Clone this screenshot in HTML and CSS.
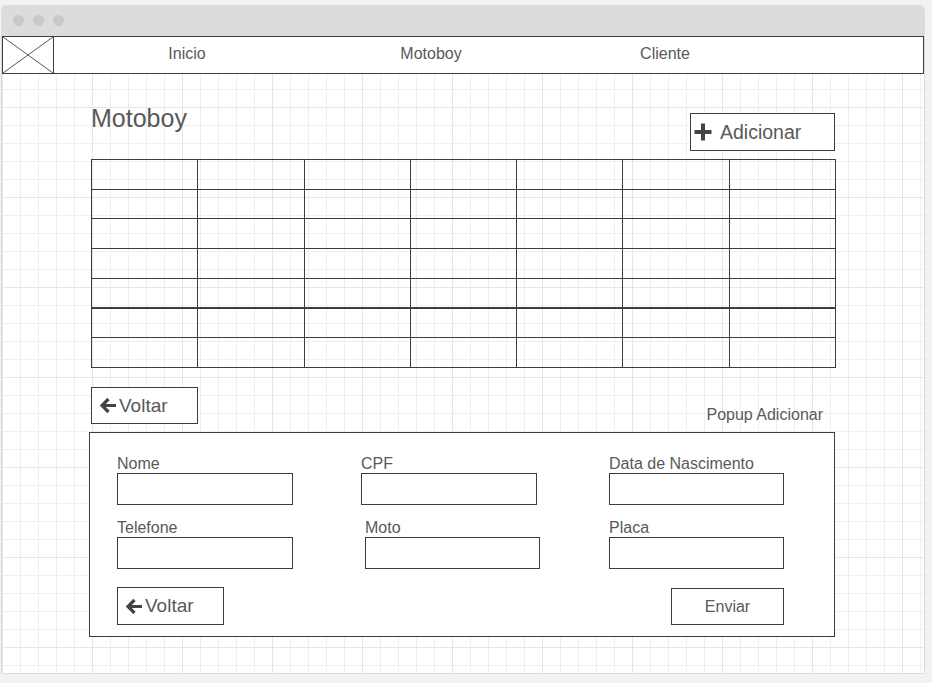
FILE: index.html
```html
<!DOCTYPE html>
<html lang="pt">
<head>
<meta charset="utf-8">
<title>Motoboy</title>
<link rel="stylesheet" href="styles.css">
</head>
<body>
<div class="window">
  <div class="titlebar">
    <span class="dot"></span><span class="dot"></span><span class="dot"></span>
  </div>
  <nav class="nav">
    <div class="logo">
      <svg class="logo-x" viewBox="0 0 50 36" preserveAspectRatio="none" width="50" height="36">
        <line x1="0" y1="0" x2="50" y2="36" stroke="#555" stroke-width="1"/>
        <line x1="50" y1="0" x2="0" y2="36" stroke="#555" stroke-width="1"/>
      </svg>
    </div>
    <a class="nav-link">Inicio</a>
    <a class="nav-link">Motoboy</a>
    <a class="nav-link">Cliente</a>
  </nav>
  <main class="canvas">
    <div class="content">
      <div class="header">
        <h1 class="title">Motoboy</h1>
        <button class="btn btn-add">
          <svg class="icon-plus" viewBox="0 0 18 18" width="18" height="18">
            <path d="M9 0.5V17.5M0.5 9H17.5" stroke="#444" stroke-width="4" fill="none"/>
          </svg>
          <span>Adicionar</span>
        </button>
      </div>
      <div class="table">
        <div class="cell"></div><div class="cell"></div><div class="cell"></div><div class="cell"></div><div class="cell"></div><div class="cell"></div><div class="cell"></div>
        <div class="cell"></div><div class="cell"></div><div class="cell"></div><div class="cell"></div><div class="cell"></div><div class="cell"></div><div class="cell"></div>
        <div class="cell"></div><div class="cell"></div><div class="cell"></div><div class="cell"></div><div class="cell"></div><div class="cell"></div><div class="cell"></div>
        <div class="cell"></div><div class="cell"></div><div class="cell"></div><div class="cell"></div><div class="cell"></div><div class="cell"></div><div class="cell"></div>
        <div class="cell cell-thick"></div><div class="cell cell-thick"></div><div class="cell cell-thick"></div><div class="cell cell-thick"></div><div class="cell cell-thick"></div><div class="cell cell-thick"></div><div class="cell cell-thick"></div>
        <div class="cell"></div><div class="cell"></div><div class="cell"></div><div class="cell"></div><div class="cell"></div><div class="cell"></div><div class="cell"></div>
        <div class="cell"></div><div class="cell"></div><div class="cell"></div><div class="cell"></div><div class="cell"></div><div class="cell"></div><div class="cell"></div>
      </div>
      <div class="actions">
        <button class="btn btn-back">
          <svg class="icon-arrow" viewBox="0 0 17 17" width="17" height="17">
            <path d="M17 8.5H3M9.5 2L3 8.5L9.5 15" stroke="#444" stroke-width="3.2" fill="none"/>
          </svg>
          <span>Voltar</span>
        </button>
        <span class="popup-label">Popup Adicionar</span>
      </div>
      <section class="popup">
        <div class="form">
          <div class="field">
            <label class="label">Nome</label>
            <div class="input"></div>
          </div>
          <div class="field">
            <label class="label">CPF</label>
            <div class="input"></div>
          </div>
          <div class="field">
            <label class="label">Data de Nascimento</label>
            <div class="input input-narrow"></div>
          </div>
          <div class="field">
            <label class="label">Telefone</label>
            <div class="input"></div>
          </div>
          <div class="field field-shift">
            <label class="label">Moto</label>
            <div class="input input-narrow"></div>
          </div>
          <div class="field">
            <label class="label">Placa</label>
            <div class="input input-narrow"></div>
          </div>
        </div>
        <div class="popup-actions">
          <button class="btn btn-back btn-back-lg">
            <svg class="icon-arrow" viewBox="0 0 17 17" width="17" height="17">
              <path d="M17 8.5H3M9.5 2L3 8.5L9.5 15" stroke="#444" stroke-width="3.2" fill="none"/>
            </svg>
            <span>Voltar</span>
          </button>
          <button class="btn btn-send">Enviar</button>
        </div>
      </section>
    </div>
  </main>
</div>
</body>
</html>
```
FILE: styles.css
```css
* { box-sizing: border-box; }

html, body {
  margin: 0;
  padding: 0;
  background: #f2f2f2;
  font-family: "Liberation Sans", Arial, sans-serif;
  color: #595959;
}

.window {
  margin: 5px 0 0 1px;
  width: 924px;
  border: 1px solid #dcdcdc;
  border-radius: 5px 5px 0 0;
  background: #fff;
  overflow: hidden;
}

.titlebar {
  height: 30px;
  background: #dcdcdc;
  display: flex;
  align-items: center;
  gap: 9px;
  padding: 0 0 1px 11px;
}

.dot {
  width: 11px;
  height: 11px;
  border-radius: 50%;
  background: #c9c9c9;
}

.nav {
  height: 38px;
  border: 1px solid #3d3d3d;
  background: #fff;
  display: grid;
  grid-template-columns: 51px 266px 222px 246px 1fr;
  align-items: center;
}

.logo {
  height: 36px;
  border-right: 1px solid #3d3d3d;
}

.logo-x { display: block; }

.nav-link {
  text-align: center;
  font-size: 16px;
  line-height: 18px;
  color: #595959;
  padding-bottom: 3px;
}

.canvas {
  height: 599px;
  padding: 30px 0 0 89px;
  background-color: #fff;
  background-image:
    linear-gradient(to right, #e6e6e6 1px, transparent 1px),
    linear-gradient(to bottom, #e6e6e6 1px, transparent 1px),
    linear-gradient(to right, #efefef 1px, transparent 1px),
    linear-gradient(to bottom, #efefef 1px, transparent 1px);
  background-size: 90px 90px, 90px 90px, 18px 18px, 18px 18px;
  background-position: 0 33px, 0 33px, 0 15px, 0 15px;
}

.content {
  width: 745px;
}

.header {
  display: flex;
  justify-content: space-between;
  align-items: flex-start;
}

.title {
  margin: 0;
  font-size: 25px;
  line-height: 29px;
  font-weight: normal;
  color: #595959;
}

.btn {
  display: flex;
  align-items: center;
  background: #fff;
  border: 1px solid #3d3d3d;
  padding: 0;
  font-family: inherit;
  color: #595959;
  cursor: pointer;
}

.btn-add {
  margin: 9px 1px 0 0;
  width: 145px;
  height: 38px;
  padding-left: 3px;
  gap: 8px;
  font-size: 19.5px;
  line-height: 22px;
}

.icon-plus, .icon-arrow { display: block; flex: none; }

.table {
  margin-top: 8px;
  width: 745px;
  height: 209px;
  border-top: 1px solid #3d3d3d;
  border-left: 1px solid #3d3d3d;
  display: grid;
  grid-template-columns: repeat(7, 1fr);
  grid-template-rows: repeat(7, 1fr);
}

.cell {
  border-right: 1px solid #3d3d3d;
  border-bottom: 1px solid #3d3d3d;
}

.cell-thick {
  border-bottom-width: 2px;
}

.actions {
  margin-top: 19px;
  display: flex;
  justify-content: space-between;
  align-items: flex-end;
  padding-right: 13px;
}

.btn-back {
  width: 107px;
  height: 37px;
  padding-left: 7px;
  gap: 3px;
  font-size: 19px;
  line-height: 22px;
}

.btn-back-lg {
  height: 38px;
}

.popup-label {
  font-size: 16px;
  line-height: 18px;
  color: #595959;
}

.popup {
  margin: 8px 0 0 -2px;
  width: 746px;
  border: 1px solid #3d3d3d;
  background: #fff;
  padding: 22px 50px 11px 27px;
}

.form {
  display: grid;
  grid-template-columns: 244px 248px 175px;
  row-gap: 14px;
}

.field-shift {
  margin-left: 4px;
}

.label {
  display: block;
  font-size: 16px;
  line-height: 18px;
  color: #595959;
}

.input {
  width: 176px;
  height: 32px;
  border: 1px solid #3d3d3d;
  background: #fff;
}

.input-narrow {
  width: 175px;
}

.popup-actions {
  margin-top: 18px;
  display: flex;
  justify-content: space-between;
  align-items: flex-end;
}

.btn-send {
  width: 113px;
  height: 37px;
  justify-content: center;
  font-size: 16px;
  line-height: 18px;
}
```
